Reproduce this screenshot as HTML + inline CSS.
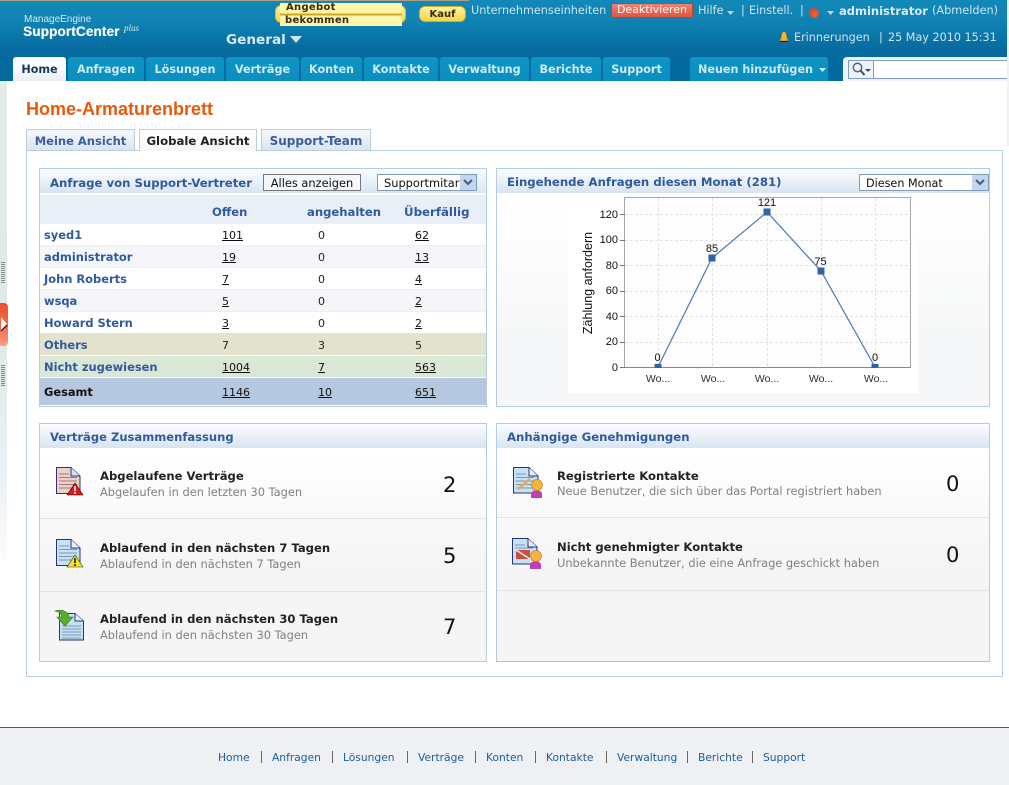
<!DOCTYPE html>
<html lang="de"><head><meta charset="utf-8"><title>Home-Armaturenbrett</title>
<style>
html,body{margin:0;padding:0;background:#fff}
body{width:1009px;height:785px;position:relative;overflow:hidden;font-family:"DejaVu Sans","Liberation Sans",sans-serif;font-size:11px;color:#222}
.a,.t{position:absolute}
.t{white-space:nowrap;line-height:14px}
.b{font-weight:bold}
.nav{position:absolute;top:57px;height:24px;background:linear-gradient(#0e95c4,#0a8fc0);border-radius:3px 3px 0 0;color:#cfe9f5;font-weight:bold;font-size:11.2px;line-height:26px;text-align:center}
.wt{color:#cfe3ee;font-size:11.2px}
.ph{position:absolute;height:24px;background:linear-gradient(#fbfcfe,#d8e5f1)}
.pt{color:#2f5a9c;font-weight:bold;font-size:11.7px}
.panel{position:absolute;border:1px solid #b3cde0;box-sizing:border-box}
.row{position:absolute;left:40px;width:446px}
.n{color:#2f5a9c;font-weight:bold;font-size:11.45px}
.u{text-decoration:underline;color:#111;font-size:11px}
.tab{position:absolute;top:129px;height:21px;box-sizing:border-box;border:1px solid #b8d0de;border-bottom:0;background:linear-gradient(#f6f9fc,#d9e5ef);color:#3a5f9f;font-weight:bold;font-size:11.5px;line-height:22px;text-align:center}
.h{font-weight:bold;font-size:11.6px;color:#222}
.s{font-size:11.4px;color:#808080}
.num{font-size:21px;color:#111;line-height:24px;font-family:"DejaVu Sans",sans-serif}
.f{position:absolute;top:751px;height:14px;line-height:14px;color:#1b5e9e;font-size:10.7px;white-space:nowrap}
.fs{position:absolute;top:751px;width:1px;height:12px;background:#666}
svg text{font-family:"Liberation Sans",sans-serif;fill:#111}
</style></head><body>

<!-- header -->
<div class="a" style="left:0;top:0;width:1009px;height:81px;background:linear-gradient(#1389b9 0,#0f82b2 28%,#066a9f 62%,#04699f 100%)"></div>
<div class="a" style="left:0;top:0;width:469px;height:1px;background:#a9a08a"></div>
<div class="t" style="left:24px;top:14px;font:10px/12px 'Liberation Sans',sans-serif;color:#d5e8f2">ManageEngine</div>
<div class="t b" style="left:23px;top:24px;font:bold 13.5px/16px 'Liberation Sans',sans-serif;letter-spacing:.15px;color:#f6fafc;text-shadow:.3px 0 0 #f6fafc">SupportCenter</div>
<div class="t" style="left:124px;top:23px;font:italic 9px/10px 'Liberation Serif',serif;color:#d5e8f2">plus</div>
<div class="t b" style="left:226px;top:32px;font-size:13.6px;line-height:16px;color:#d9e9f2">General</div>
<svg class="a" style="left:290px;top:36px" width="12" height="8"><path d="M0 0H12L6 7Z" fill="#cfe3ee"/></svg>

<!-- yellow buttons -->
<div class="a" style="left:275px;top:5px;width:131px;height:18px;border-radius:6px;background:linear-gradient(#fff3a0,#f5d545);border:1px solid #d9b530;box-sizing:border-box"></div>
<div class="a" style="left:280px;top:3px;width:122px;height:23px;background:linear-gradient(#fff8b4 0,#fff3a0 45%,#c9a92c 46%,#c9a92c 54%,#fff6ad 55%,#fff6ad 100%)"></div>
<div class="t b" style="left:286px;top:2px;font-size:10px;line-height:12px;color:#3b2a10;letter-spacing:.3px">Angebot</div>
<div class="t b" style="left:285px;top:15px;font-size:10px;line-height:12px;color:#3b2a10;letter-spacing:.3px">bekommen</div>
<div class="a" style="left:419px;top:6px;width:47px;height:16px;border-radius:6px;background:linear-gradient(#fff3a0,#f5d545);border:1px solid #d2ad2c;box-sizing:border-box;text-align:center;font-weight:bold;font-size:10px;line-height:16px;color:#3b2a10">Kauf</div>

<div class="t wt" style="left:471px;top:4px">Unternehmenseinheiten</div>
<div class="a" style="left:611px;top:3px;width:82px;height:15px;background:linear-gradient(#f08070,#e2553f);border:1px solid #c0402c;box-sizing:border-box;border-radius:2px;color:#fff;text-align:center;font-size:11px;line-height:12px">Deaktivieren</div>
<div class="t wt" style="left:698px;top:4px">Hilfe</div>
<svg class="a" style="left:727px;top:11px" width="7" height="4"><path d="M0 0H7L3.5 4Z" fill="#b8d4e3"/></svg>
<div class="t wt" style="left:741px;top:4px">|</div>
<div class="t wt" style="left:749px;top:4px">Einstell.</div>
<div class="t wt" style="left:800px;top:4px">|</div>
<div class="a" style="left:809px;top:8px;width:10px;height:10px;border-radius:50%;background:radial-gradient(circle at 60% 65%,#f0643c,#c93a18)"></div>
<svg class="a" style="left:827px;top:11px" width="7" height="4"><path d="M0 0H7L3.5 4Z" fill="#b8d4e3"/></svg>
<div class="t b" style="left:839px;top:4px;color:#dcebf3;font-size:11.5px">administrator</div>
<div class="t wt" style="left:932px;top:4px;font-size:11.3px">(Abmelden)</div>

<svg class="a" style="left:778px;top:31px" width="12" height="12" viewBox="0 0 12 12"><path d="M6 0.5C4 1 3.5 3 3.2 5.5C3 8 1.5 9 1 10H11C10.500 9 9 8 8.800 5.500C8.500 3 8 1 6 0.500Z" fill="#f5b52e" stroke="#7a5510" stroke-width=".5"/><path d="M1 10H11V11H1Z" fill="#222"/></svg>
<div class="t wt" style="left:794px;top:31px">Erinnerungen</div>
<div class="t wt" style="left:879px;top:31px">|</div>
<div class="t wt" style="left:888px;top:31px">25 May 2010 15:31</div>

<!-- nav tabs -->
<div class="nav" style="left:13px;width:53px;background:linear-gradient(#fff 30%,#e9eef3);color:#17375e">Home</div>
<div class="nav" style="left:68px;width:76px">Anfragen</div>
<div class="nav" style="left:146px;width:78px">Lösungen</div>
<div class="nav" style="left:226px;width:73px">Verträge</div>
<div class="nav" style="left:301px;width:61px">Konten</div>
<div class="nav" style="left:364px;width:74px">Kontakte</div>
<div class="nav" style="left:440px;width:89px">Verwaltung</div>
<div class="nav" style="left:531px;width:70px">Berichte</div>
<div class="nav" style="left:603px;width:67px">Support</div>
<div class="nav" style="left:690px;width:138px;text-align:left;text-indent:8px">Neuen hinzufügen</div>
<svg class="a" style="left:819px;top:68px" width="7" height="4"><path d="M0 0H7L3.5 4Z" fill="#cfe9f5"/></svg>

<!-- search -->
<div class="a" style="left:843px;top:57px;width:164px;height:24px;background:#eef3f8;border-radius:4px 0 0 0"></div>
<div class="a" style="left:848px;top:60px;width:159px;height:19px;background:#fff;border:1px solid #7f9cc3;box-sizing:border-box;border-right:0"></div>
<div class="a" style="left:848px;top:60px;width:26px;height:19px;background:#eef3f9;border:1px solid #7f9cc3;box-sizing:border-box"></div>
<svg class="a" style="left:851px;top:62px" width="22" height="15" viewBox="0 0 22 15"><circle cx="6.500" cy="5.500" r="4.200" fill="none" stroke="#4c6580" stroke-width="1.500"/><path d="M9.500 8.500L13.500 13" stroke="#33506f" stroke-width="2"/><path d="M14 7H20L17 10Z" fill="#33506f"/></svg>
<div class="a" style="left:1007px;top:0;width:2px;height:146px;background:#f3f3f3"></div>

<!-- left handle -->
<div class="a" style="left:0;top:81px;width:7px;height:480px;background:linear-gradient(#e4ecea 0,#e0e8e6 50%,#eaf0f3 80%,#fbfcfc 100%)"></div>
<div class="a" style="left:1px;top:262px;width:4px;height:22px;background:repeating-linear-gradient(#8a8a8a 0 1px,#e0e8e6 1px 2px)"></div>
<div class="a" style="left:1px;top:365px;width:4px;height:22px;background:repeating-linear-gradient(#8a8a8a 0 1px,#e0e8e6 1px 2px)"></div>
<div class="a" style="left:0;top:303px;width:8px;height:43px;border-radius:0 4px 4px 0;background:linear-gradient(#e9532f,#ec6a48 50%,#fb8a70 85%,#f0a58f)"></div>
<svg class="a" style="left:0;top:316px" width="8" height="18"><path d="M1 1L7 8L1 15Z" fill="#f2f2f2"/><path d="M1 15L7 9" stroke="#111" stroke-width="1.200"/></svg>

<!-- title -->
<div class="t" style="left:26px;top:99px;font:bold 18px/21px 'Liberation Sans',sans-serif;color:#e7590d">Home-Armaturenbrett</div>

<!-- outer container -->
<div class="a" style="left:26px;top:150px;width:977px;height:527px;border:1px solid #b8d0de;box-sizing:border-box"></div>
<div class="tab" style="left:26px;width:109px">Meine Ansicht</div>
<div class="tab" style="left:139px;width:118px;height:22px;background:linear-gradient(#fff,#f4f8fb);color:#222;font-size:11.7px">Globale Ansicht</div>
<div class="tab" style="left:261px;width:110px;font-size:12px">Support-Team</div>

<!-- panel 1 -->
<div class="panel" style="left:39px;top:168px;width:448px;height:239px"></div>
<div class="ph" style="left:40px;top:169px;width:446px"></div>
<div class="t pt" style="left:50px;top:176px">Anfrage von Support-Vertreter</div>
<div class="a" style="left:263px;top:174px;width:98px;height:17px;border:1px solid #777;box-sizing:border-box;background:#f4f7fb;text-align:center;font-size:11.4px;line-height:17px;color:#111">Alles anzeigen</div>
<div class="a" style="left:377px;top:174px;width:100px;height:17px;border:1px solid #7f9db9;box-sizing:border-box;background:#fff;font-size:11.4px;line-height:17px;color:#111;padding-left:6px;overflow:hidden;white-space:nowrap">Supportmitar</div>
<div class="a" style="left:460px;top:175px;width:16px;height:15px;background:#c4d5f2"></div>
<svg class="a" style="left:463px;top:179px" width="10" height="7"><path d="M1 1L5 5L9 1" fill="none" stroke="#47587f" stroke-width="2"/></svg>

<div class="row" style="top:195px;height:29px;background:#e8eff6"></div>
<div class="t n" style="left:212px;top:205px;font-size:11.6px">Offen</div>
<div class="t n" style="left:307px;top:205px;font-size:11.6px">angehalten</div>
<div class="t n" style="left:404px;top:205px;font-size:11.8px">Überfällig</div>

<div class="row" style="top:224px;height:21px;background:#fff;border-bottom:1px solid #eceff3"></div>
<div class="row" style="top:246px;height:21px;background:#f4f6fa;border-bottom:1px solid #eceff3"></div>
<div class="row" style="top:268px;height:21px;background:#fff;border-bottom:1px solid #eceff3"></div>
<div class="row" style="top:290px;height:21px;background:#f4f6fa;border-bottom:1px solid #eceff3"></div>
<div class="row" style="top:312px;height:21px;background:#fff"></div>
<div class="row" style="top:333px;height:22px;background:#e2e2cf"></div>
<div class="row" style="top:356px;height:21px;background:#dbe7d5;border-bottom:1px solid #fff"></div>
<div class="row" style="top:378px;height:27px;background:#b5c8e0"></div>

<div class="t n" style="left:44px;top:228px">syed1</div><div class="t u" style="left:222px;top:229px">101</div><div class="t" style="left:318px;top:229px">0</div><div class="t u" style="left:415px;top:229px">62</div>
<div class="t n" style="left:44px;top:250px">administrator</div><div class="t u" style="left:222px;top:251px">19</div><div class="t" style="left:318px;top:251px">0</div><div class="t u" style="left:415px;top:251px">13</div>
<div class="t n" style="left:44px;top:272px">John Roberts</div><div class="t u" style="left:222px;top:273px">7</div><div class="t" style="left:318px;top:273px">0</div><div class="t u" style="left:415px;top:273px">4</div>
<div class="t n" style="left:44px;top:294px">wsqa</div><div class="t u" style="left:222px;top:295px">5</div><div class="t" style="left:318px;top:295px">0</div><div class="t u" style="left:415px;top:295px">2</div>
<div class="t n" style="left:44px;top:316px">Howard Stern</div><div class="t u" style="left:222px;top:317px">3</div><div class="t" style="left:318px;top:317px">0</div><div class="t u" style="left:415px;top:317px">2</div>
<div class="t n" style="left:44px;top:338px">Others</div><div class="t" style="left:222px;top:339px">7</div><div class="t" style="left:318px;top:339px">3</div><div class="t" style="left:415px;top:339px">5</div>
<div class="t n" style="left:44px;top:360px">Nicht zugewiesen</div><div class="t u" style="left:222px;top:361px">1004</div><div class="t u" style="left:318px;top:361px">7</div><div class="t u" style="left:415px;top:361px">563</div>
<div class="t b" style="left:44px;top:385px;color:#111;font-size:11.4px">Gesamt</div><div class="t u" style="left:222px;top:386px">1146</div><div class="t u" style="left:318px;top:386px">10</div><div class="t u" style="left:415px;top:386px">651</div>

<!-- panel 2 -->
<div class="panel" style="left:496px;top:168px;width:494px;height:239px;background:linear-gradient(#fff 15%,#f6f7f8 70%)"></div>
<div class="ph" style="left:497px;top:169px;width:492px"></div>
<div class="t pt" style="left:507px;top:175px">Eingehende Anfragen diesen Monat (281)</div>
<div class="a" style="left:859px;top:174px;width:130px;height:17px;border:1px solid #7f9db9;box-sizing:border-box;background:#fff;font-size:11.2px;line-height:17px;color:#111;padding-left:6px">Diesen Monat</div>
<div class="a" style="left:972px;top:175px;width:16px;height:15px;background:#c4d5f2"></div>
<svg class="a" style="left:975px;top:179px" width="10" height="7"><path d="M1 1L5 5L9 1" fill="none" stroke="#47587f" stroke-width="2"/></svg>

<svg class="a" style="left:568px;top:197px" width="350" height="196" viewBox="568 197 350 196">
<rect x="568" y="197" width="350" height="196" fill="#fff"/>
<rect x="624.500" y="197.500" width="286" height="170" fill="#fdfdfd" stroke="#a4a8ab"/>
<g stroke="#e2e2e2" stroke-dasharray="3 2" fill="none">
<path d="M625 214.500H910M625 240.500H910M625 265.500H910M625 291.500H910M625 316.500H910M625 342.500H910"/>
<path d="M658.500 198V367M712.500 198V367M767.500 198V367M821.500 198V367M875.500 198V367"/>
</g>
<path d="M624.500 367.500H910.500" stroke="#888"/>
<path d="M620 214.500h5M620 240.500h5M620 265.500h5M620 291.500h5M620 316.500h5M620 342.500h5M620 367.500h5" stroke="#777"/>
<polyline points="658,367 712,258 767,212 821,271 875,367" fill="none" stroke="#4a78b0" stroke-width="1.200"/>
<g fill="#2f62a8"><rect x="654.500" y="364" width="7" height="4"/><rect x="708.500" y="254.500" width="7" height="7"/><rect x="763.500" y="208.500" width="7" height="7"/><rect x="817.500" y="267.500" width="7" height="7"/><rect x="871.500" y="364" width="7" height="4"/></g>
<g font-size="11" text-anchor="end"><text x="618" y="218">120</text><text x="618" y="243">100</text><text x="618" y="269">80</text><text x="618" y="294">60</text><text x="618" y="320">40</text><text x="618" y="345">20</text><text x="618" y="371">0</text></g>
<g font-size="11" text-anchor="middle"><text x="657.500" y="361">0</text><text x="712" y="252">85</text><text x="767" y="206">121</text><text x="820.500" y="265">75</text><text x="875" y="361">0</text></g>
<g font-size="10.500" text-anchor="middle" fill-opacity=".9"><text x="658" y="382">Wo...</text><text x="713" y="382">Wo...</text><text x="767" y="382">Wo...</text><text x="821" y="382">Wo...</text><text x="876" y="382">Wo...</text></g>
<text font-size="12.500" text-anchor="middle" transform="translate(592 283) rotate(-90)">Zählung anfordern</text>
</svg>

<!-- panel 3 -->
<div class="panel" style="left:39px;top:423px;width:448px;height:239px;background:linear-gradient(#fff 12%,#f5f5f5 60%)"></div>
<div class="ph" style="left:40px;top:424px;width:446px"></div>
<div class="t pt" style="left:50px;top:430px;font-size:11.55px">Verträge Zusammenfassung</div>
<div class="a" style="left:40px;top:518px;width:446px;height:1px;background:#e4e4e4"></div>
<div class="a" style="left:40px;top:591px;width:446px;height:1px;background:#e4e4e4"></div>

<svg class="a" style="left:55px;top:466px" width="30" height="30" viewBox="0 0 30 30"><path d="M1.500 1.500H16L25 10V27.500H1.500Z" fill="#ecd0ca" stroke="#28337a" stroke-width="1"/><path d="M16 1.500V10H25" fill="#cfe4f2" stroke="#28337a"/><path d="M4 8H14M4 11.500H22M4 15H22M4 18.500H22M4 22H22" stroke="#a87878"/><path d="M20 17L28 29H12Z" fill="#e01818" stroke="#300" stroke-width=".6"/><path d="M20 20V25M20 26V28" stroke="#fff" stroke-width="1.500"/></svg>
<div class="t h" style="left:100px;top:469px">Abgelaufene Verträge</div>
<div class="t s" style="left:100px;top:485px">Abgelaufen in den letzten 30 Tagen</div>
<div class="t num" style="left:443px;top:473px">2</div>

<svg class="a" style="left:55px;top:538px" width="30" height="30" viewBox="0 0 30 30"><path d="M1.500 1.500H16L25 10V27.500H1.500Z" fill="#c4e2f4" stroke="#28337a"/><path d="M16 1.500V10H25" fill="#e3f0f8" stroke="#28337a"/><path d="M4 8H14M4 11.500H22M4 15H22M4 18.500H22M4 22H22" stroke="#7e96b0"/><path d="M20 17L28 29H12Z" fill="#f7e21c" stroke="#333" stroke-width=".6"/><path d="M20 20V25M20 26V28" stroke="#111" stroke-width="1.500"/></svg>
<div class="t h" style="left:100px;top:541px">Ablaufend in den nächsten 7 Tagen</div>
<div class="t s" style="left:100px;top:557px">Ablaufend in den nächsten 7 Tagen</div>
<div class="t num" style="left:443px;top:544px">5</div>

<svg class="a" style="left:54px;top:609px" width="32" height="32" viewBox="0 0 32 32"><path d="M5.500 4.500H21L29.500 12V31H5.500Z" fill="#c4e2f4" stroke="#28337a"/><path d="M21 4.500V12H29.500" fill="#e3f0f8" stroke="#28337a"/><path d="M8 17H27M8 20H27M8 23H27M8 26H27M8 29H27" stroke="#7e96b0"/><path d="M1 2C8 0 14 2 15 8H19L11 17L3 8H8C8 5 5 3 1 2Z" fill="#56ae2a" stroke="#2c7a14" stroke-width=".6"/></svg>
<div class="t h" style="left:100px;top:612px">Ablaufend in den nächsten 30 Tagen</div>
<div class="t s" style="left:100px;top:628px">Ablaufend in den nächsten 30 Tagen</div>
<div class="t num" style="left:443px;top:615px">7</div>

<!-- panel 4 -->
<div class="panel" style="left:496px;top:423px;width:494px;height:239px;background:linear-gradient(#fff 12%,#f5f5f5 60%);border-bottom-color:#b8bec4"></div>
<div class="ph" style="left:497px;top:424px;width:492px"></div>
<div class="t pt" style="left:507px;top:430px">Anhängige Genehmigungen</div>
<div class="a" style="left:497px;top:517px;width:492px;height:1px;background:#e4e4e4"></div>
<div class="a" style="left:497px;top:590px;width:492px;height:1px;background:#e4e4e4"></div>

<svg class="a" style="left:512px;top:466px" width="32" height="34" viewBox="0 0 32 34"><path d="M1.500 1.500H17L26 10V27H1.500Z" fill="#c4e2f4" stroke="#28337a"/><path d="M17 1.500V10H26" fill="#e3f0f8" stroke="#28337a"/><path d="M4 8H14M4 11.500H22M4 15H22M4 18.500H22M4 22H22" stroke="#7e96b0"/><path d="M6 23L18 13" stroke="#e8a860" stroke-width="2.500"/><path d="M19 28C19 23 30 23 30 28V32H19Z" fill="#c040b0"/><circle cx="25" cy="19" r="5.500" fill="#f3b33c" stroke="#c07a10" stroke-width=".6"/></svg>
<div class="t h" style="left:557px;top:469px">Registrierte Kontakte</div>
<div class="t s" style="left:557px;top:484px">Neue Benutzer, die sich über das Portal registriert haben</div>
<div class="t num" style="left:946px;top:472px">0</div>

<svg class="a" style="left:511px;top:537px" width="32" height="34" viewBox="0 0 32 34"><path d="M1.500 1.500H17L26 10V27H1.500Z" fill="#c4e2f4" stroke="#28337a"/><path d="M17 1.500V10H26" fill="#e3f0f8" stroke="#28337a"/><path d="M4 8H14M4 11H22" stroke="#7e96b0"/><rect x="5" y="13" width="14" height="9" fill="#c8503c"/><path d="M5 13L19 22" stroke="#eee" stroke-width="1.500"/><path d="M19 28C19 23 30 23 30 28V32H19Z" fill="#c040b0"/><circle cx="25" cy="19" r="5.500" fill="#f3b33c" stroke="#c07a10" stroke-width=".6"/></svg>
<div class="t h" style="left:557px;top:540px">Nicht genehmigter Kontakte</div>
<div class="t s" style="left:557px;top:556px">Unbekannte Benutzer, die eine Anfrage geschickt haben</div>
<div class="t num" style="left:946px;top:543px">0</div>

<!-- footer -->
<div class="a" style="left:0;top:727px;width:1009px;height:58px;background:#eff0f4;border-top:1px solid #1a7199;box-sizing:border-box"></div>
<div class="f" style="left:218px">Home</div><div class="fs" style="left:261px"></div>
<div class="f" style="left:272px">Anfragen</div><div class="fs" style="left:332px"></div>
<div class="f" style="left:343px">Lösungen</div><div class="fs" style="left:407px"></div>
<div class="f" style="left:418px">Verträge</div><div class="fs" style="left:475px"></div>
<div class="f" style="left:486px">Konten</div><div class="fs" style="left:535px"></div>
<div class="f" style="left:546px">Kontakte</div><div class="fs" style="left:606px"></div>
<div class="f" style="left:617px">Verwaltung</div><div class="fs" style="left:687px"></div>
<div class="f" style="left:698px">Berichte</div><div class="fs" style="left:752px"></div>
<div class="f" style="left:763px">Support</div>
</body></html>
